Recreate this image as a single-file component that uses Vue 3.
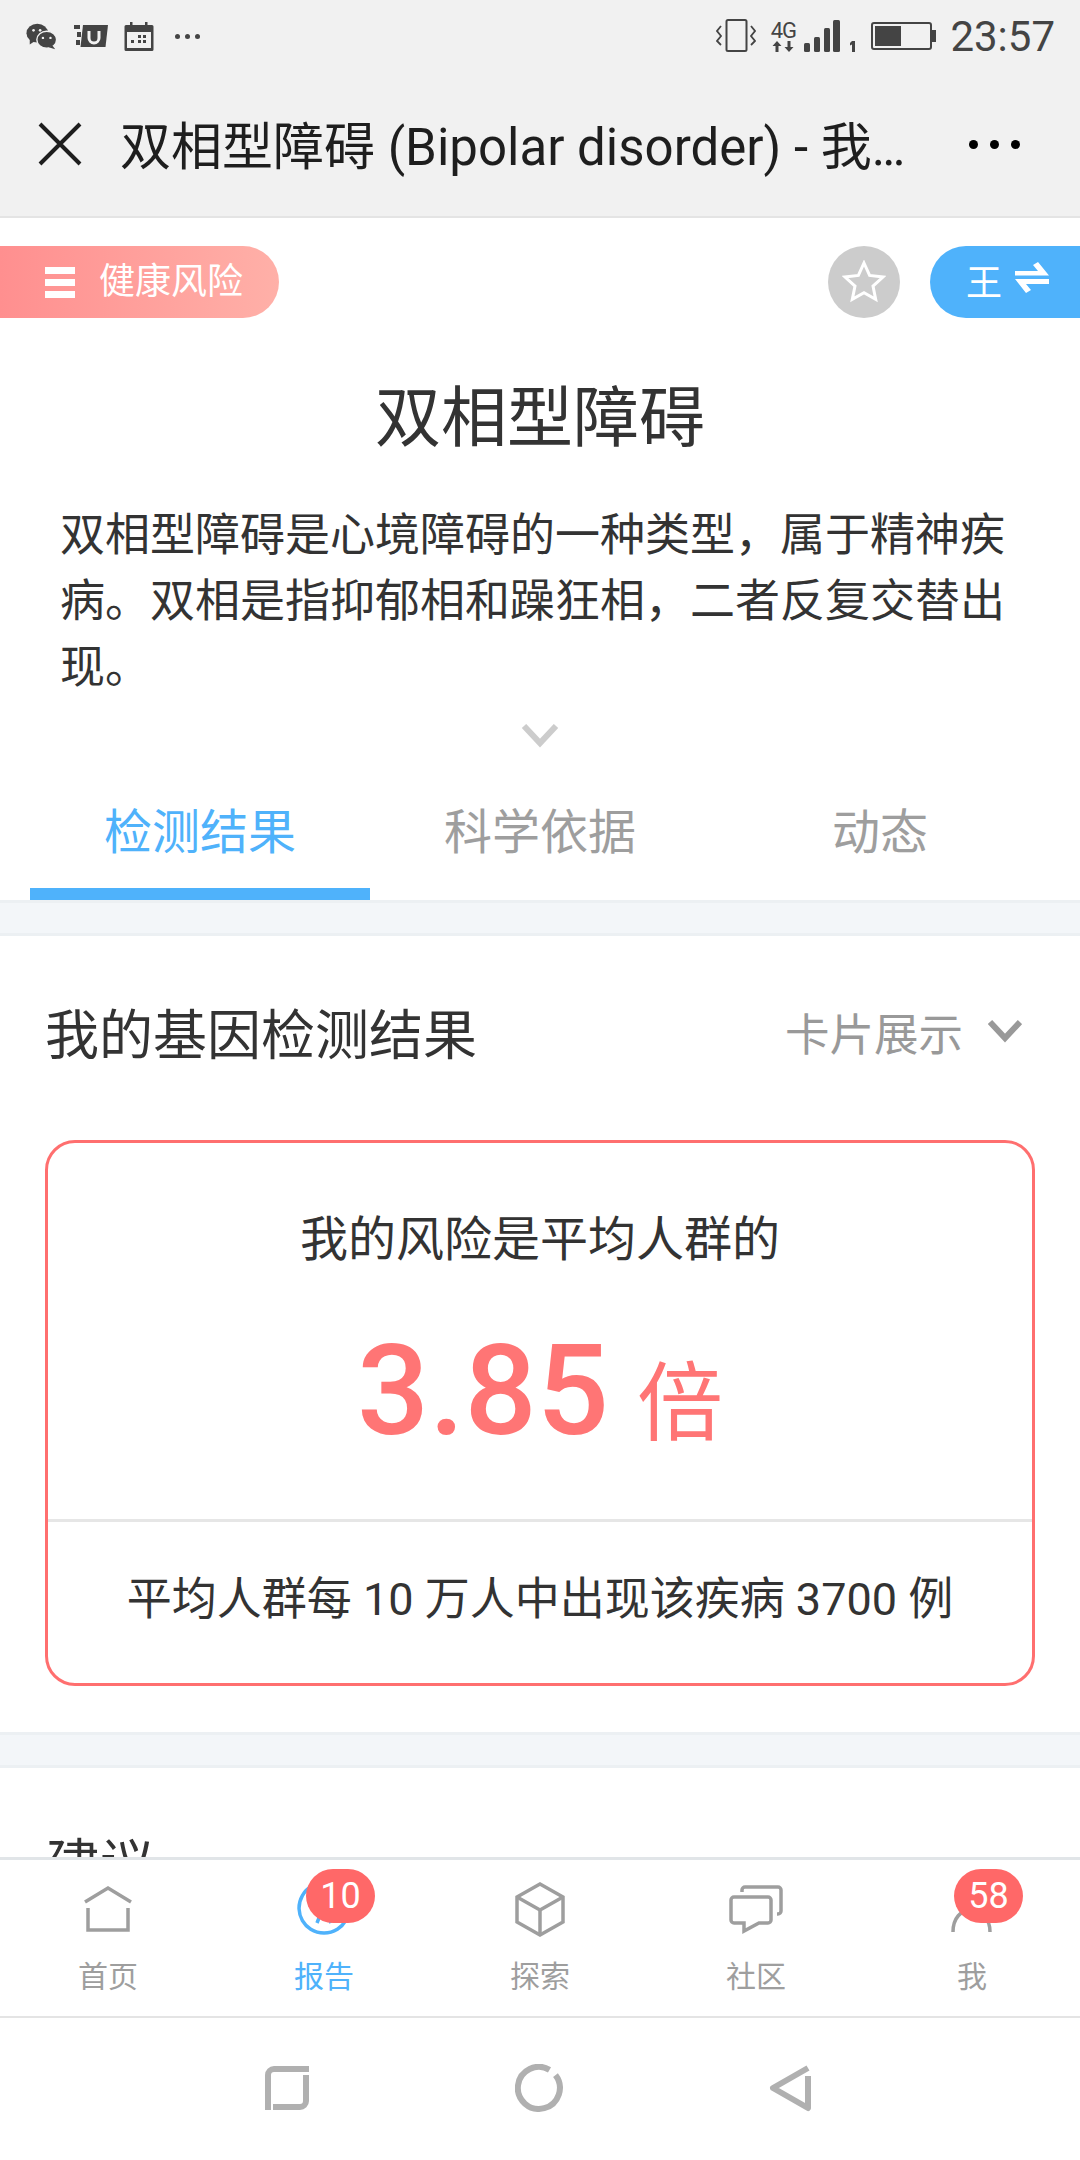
<template>
  <div class="page">
    <div class="status-bar">
      <div class="status-left">
        <svg width="32" height="28" viewBox="0 0 34 28"><ellipse cx="12" cy="11" rx="11.5" ry="10" fill="#444"/><path d="M4 17l0 6 6-4z" fill="#444"/><ellipse cx="22" cy="18" rx="10.500" ry="9" fill="#444" stroke="#f1f1f1" stroke-width="1.500"/><path d="M28 24l3 4-7-2z" fill="#444"/><circle cx="8" cy="8" r="1.400" fill="#f1f1f1"/><circle cx="15" cy="8" r="1.400" fill="#f1f1f1"/><circle cx="18" cy="16" r="1.300" fill="#f1f1f1"/><circle cx="26" cy="16" r="1.300" fill="#f1f1f1"/></svg>
        <svg width="34" height="24" viewBox="0 0 34 24"><path d="M0 1h6v4H0zM3 8h4v5H3zM2 16h4v5H2z" fill="#444"/><path d="M9 1h25l-2.500 22H6.500z" fill="#444"/><path d="M15 7v7a5 5 0 0 0 10 0V7" fill="none" stroke="#f1f1f1" stroke-width="3"/></svg>
        <svg width="30" height="29" viewBox="0 0 30 29"><path d="M2 3h26a1.500 1.500 0 0 1 1.500 1.500V27.500A1.500 1.500 0 0 1 28 29H2A1.500 1.500 0 0 1 .5 27.500V4.500A1.500 1.500 0 0 1 2 3z" fill="#444"/><rect x="6" y="0" width="2.500" height="5" fill="#444"/><rect x="21" y="0" width="2.500" height="5" fill="#444"/><rect x="3" y="10" width="24" height="16" fill="#f1f1f1"/><path d="M14 13h3v3h-3zM19 13h3v3h-3zM7 18h3v3H7zM14 18h3v3h-3zM19 18h3v3h-3z" fill="#444"/></svg>
        <div class="status-more"><i></i><i></i><i></i></div>
      </div>
      <div class="status-right">
        <svg width="40" height="34" viewBox="0 0 40 34"><rect x="10.500" y="1" width="20" height="31" rx="1.500" fill="none" stroke="#444" stroke-width="2"/><path d="M5 7L1 12l4 5-4 5 4 4M35 7l4 5-4 5 4 5-4 4" fill="none" stroke="#444" stroke-width="1.800"/></svg>
        <div class="net">
          <span>4G</span>
          <svg width="22" height="11" viewBox="0 0 22 11"><path d="M5 0l4.500 5H6.500v6h-3V5H.5zM17 11l-4.500-5h3V0h3v6h3z" fill="#444"/></svg>
        </div>
        <svg class="signal" width="53" height="33" viewBox="0 0 53 33"><rect x="0" y="23" width="6" height="9" rx="1.500" fill="#444"/><rect x="10" y="17" width="6" height="15" rx="1.500" fill="#444"/><rect x="20" y="8" width="6" height="24" rx="1.500" fill="#444"/><rect x="29" y="0" width="7" height="32" rx="1.500" fill="#444"/><path d="M48 21h3v11h-3v-7.500l-2 1v-2.500z" fill="#444"/></svg>
        <svg class="battery" width="65" height="28" viewBox="0 0 65 28"><rect x="1" y="1" width="59" height="26" rx="2" fill="none" stroke="#444" stroke-width="2"/><rect x="4" y="4" width="26" height="20" fill="#444"/><rect x="61" y="8" width="4" height="12" fill="#444"/></svg>
        <span class="clock">23:57</span>
      </div>
    </div>

    <div class="nav-bar">
      <svg class="nav-close" width="44" height="44" viewBox="0 0 44 44"><path d="M2 2l40 40M42 2L2 42" stroke="#1e1e1e" stroke-width="4" fill="none"/></svg>
      <div class="nav-title">双相型障碍 (Bipolar disorder) - 我<span class="dots">...</span></div>
      <div class="nav-more"><i></i><i></i><i></i></div>
    </div>

    <div class="scroll">
      <div class="head">
        <div class="top-row">
          <div class="risk-tag">
            <span class="burger"><i></i><i></i><i></i></span>
            <span class="risk-text">健康风险</span>
          </div>
          <div class="star">
            <svg width="44" height="44" viewBox="0 0 44 44"><path d="M22 3l5.600 12.400 13.400 1.600-10 9.100 2.700 13.300L22 32.800 10.300 39.400 13 26.100 3 17l13.400-1.600z" fill="none" stroke="#fff" stroke-width="3"/></svg>
          </div>
          <div class="user-pill">
            <span class="user-name">王</span>
            <svg class="swap" width="34" height="32" viewBox="0 0 34 32"><path d="M0 10H23L18 4l5-3 11 13.500H0zM34 18v5H11l5 6-5 3L0 18z" fill="#fff"/></svg>
          </div>
        </div>
        <h1 class="title">双相型障碍</h1>
        <p class="desc">双相型障碍是心境障碍的一种类型，属于精神疾病。双相是指抑郁相和躁狂相，二者反复交替出现。</p>
        <div class="expand">
          <svg width="38" height="24" viewBox="0 0 38 24"><path d="M3 2l16 17L35 2" fill="none" stroke="#ccc" stroke-width="6"/></svg>
        </div>
        <div class="tabs">
          <div v-for="(t, i) in tabs" :key="t" class="tab" :class="{ active: i === 0 }">{{ t }}</div>
        </div>
      </div>

      <div class="band"></div>

      <section class="result">
        <div class="result-head">
          <h2>我的基因检测结果</h2>
          <div class="mode">
            <span>卡片展示</span>
            <svg width="34" height="24" viewBox="0 0 34 24"><path d="M2 3l15 16L32 3" fill="none" stroke="#999" stroke-width="6"/></svg>
          </div>
        </div>
        <div class="risk-card">
          <div class="risk-main">
            <p class="risk-label">我的风险是平均人群的</p>
            <p class="risk-value"><b>3.85</b> <span>倍</span></p>
          </div>
          <p class="risk-foot">平均人群每 10 万人中出现该疾病 3700 例</p>
        </div>
      </section>

      <div class="band"></div>

      <section class="advice"><h2>建议</h2></section>
    </div>

    <div class="tab-bar">
      <div v-for="item in navItems" :key="item.label" class="tab-item" :class="{ on: item.on }">
        <div class="tab-icon">
          <svg width="64" height="64" viewBox="0 0 64 64" fill="none" :stroke="item.on ? '#4fb2fb' : '#9e9e9e'" stroke-width="3.500">
            <path v-for="d in item.paths" :key="d" :d="d" />
          </svg>
          <span v-if="item.badge" class="badge">{{ item.badge }}</span>
        </div>
        <span class="tab-label">{{ item.label }}</span>
      </div>
    </div>

    <div class="sys-bar">
      <svg width="44" height="44" viewBox="0 0 44 44"><path d="M3 44V9a6 6 0 0 1 6-6h35M41 9v26a6 6 0 0 1-6 6H8" fill="none" stroke="#b0b0b0" stroke-width="6"/></svg>
      <svg width="48" height="48" viewBox="0 0 48 48"><path d="M40.500 11.100A21 21 0 1 1 34.500 5.800" fill="none" stroke="#b0b0b0" stroke-width="6"/></svg>
      <svg width="42" height="48" viewBox="0 0 42 48"><path d="M39 4L4 24l35 20V12" fill="none" stroke="#b0b0b0" stroke-width="6" stroke-linejoin="round"/></svg>
    </div>
  </div>
</template>

<script setup>
const tabs = ['检测结果', '科学依据', '动态']

const navItems = [
  { label: '首页', paths: ['M9 20L32 6l23 14', 'M12 26v22h40V26'] },
  { label: '报告', on: true, badge: '10', paths: ['M32 1a25 25 0 1 0 .1 0', 'M25 41l7-18 7 18'] },
  { label: '探索', paths: ['M32 2L55 15v25L32 53 9 40V15z', 'M9 15l23 13 23-13', 'M32 28v25'] },
  { label: '社区', paths: ['M10 15h34a3 3 0 0 1 3 3v20a3 3 0 0 1-3 3H35l-15 8v-8H10a3 3 0 0 1-3-3V18a3 3 0 0 1 3-3z', 'M18 10V8a3 3 0 0 1 3-3h33a3 3 0 0 1 3 3v21a3 3 0 0 1-3 3h-1'] },
  { label: '我', badge: '58', paths: ['M13 50c0-14 8-22 18-22s19 8 19 22', 'M31 6a11 11 0 1 0 .1 0'] }
]
</script>

<style>
html, body {
  margin: 0;
  background: #fff;
}
</style>

<style scoped>
.page {
  width: 1080px;
  height: 2160px;
  display: flex;
  flex-direction: column;
  overflow: hidden;
  font-family: Roboto, "Noto Sans CJK SC", sans-serif;
  color: #333;
  background: #fff;
}

p, h1, h2 {
  margin: 0;
  font-weight: 400;
}

/* status bar */
.status-bar {
  height: 72px;
  flex: none;
  box-sizing: border-box;
  padding: 0 25px 0 26px;
  display: flex;
  align-items: center;
  justify-content: space-between;
  background: #f1f1f1;
  color: #444;
}

.status-left {
  display: flex;
  align-items: center;
  gap: 16px;
}

.status-more {
  display: flex;
  gap: 5px;
  margin-left: 5px;
}

.status-more i {
  width: 5px;
  height: 5px;
  border-radius: 50%;
  background: #444;
}

.status-right {
  display: flex;
  align-items: center;
  gap: 14px;
}

.net {
  width: 26px;
  display: flex;
  flex-direction: column;
  align-items: center;
}

.net span {
  font-size: 22px;
  line-height: 20px;
  letter-spacing: -1px;
}

.signal {
  margin-left: -6px;
}

.clock {
  font-size: 42px;
}

/* nav bar */
.nav-bar {
  height: 146px;
  flex: none;
  box-sizing: border-box;
  padding: 0 60px 0 38px;
  display: flex;
  align-items: center;
  background: #f1f1f1;
  border-bottom: 2px solid #e4e4e4;
}

.nav-close {
  flex: none;
  margin-right: 38px;
}

.nav-title {
  flex: 1;
  margin-top: -3px;
  font-size: 51px;
  color: #1e1e1e;
  white-space: nowrap;
}

.dots {
  letter-spacing: -3px;
}

.nav-more {
  display: flex;
  gap: 12px;
}

.nav-more i {
  width: 9px;
  height: 9px;
  border-radius: 50%;
  background: #000;
}

/* head */
.scroll {
  flex: 1;
  min-height: 0;
  overflow: hidden;
}

.top-row {
  display: flex;
  align-items: center;
  padding-top: 28px;
  height: 72px;
}

.risk-tag {
  width: 279px;
  height: 72px;
  box-sizing: border-box;
  padding-left: 45px;
  display: flex;
  align-items: center;
  gap: 24px;
  border-radius: 0 36px 36px 0;
  background: linear-gradient(90deg, #ff8f8f, #ffb0a8);
  color: #fff;
  font-size: 36px;
}

.risk-text {
  margin-top: -8px;
}

.burger {
  display: flex;
  flex-direction: column;
  gap: 5px;
}

.burger i {
  width: 30px;
  height: 7px;
  background: #fff;
}

.star {
  width: 72px;
  height: 72px;
  margin-left: auto;
  border-radius: 50%;
  background: #ccc;
  display: flex;
  align-items: center;
  justify-content: center;
}

.user-pill {
  width: 150px;
  height: 72px;
  margin-left: 30px;
  box-sizing: border-box;
  padding-left: 36px;
  display: flex;
  align-items: center;
  gap: 13px;
  border-radius: 36px 0 0 36px;
  background: #4fb2fb;
  color: #fff;
  font-size: 36px;
}

.user-name {
  margin-top: -5px;
}

.swap {
  margin-top: -10px;
}

.title {
  margin-top: 56px;
  text-align: center;
  font-size: 66px;
  line-height: 90px;
  color: #333;
}

.desc {
  margin: 39px 60px 0;
  font-size: 45px;
  line-height: 66px;
  color: #333;
}

.expand {
  height: 24px;
  margin-top: 23px;
  display: flex;
  justify-content: center;
}

.tabs {
  padding: 0 30px;
  display: flex;
}

.tab {
  flex: 1;
  height: 152px;
  box-sizing: border-box;
  padding-top: 52px;
  text-align: center;
  font-size: 48px;
  line-height: 66px;
  color: #9e9e9e;
}

.tab.active {
  color: #4fb2fb;
  border-bottom: 12px solid #4fb2fb;
}

.band {
  height: 30px;
  background: #f3f6f9;
  border-top: 3px solid #ecf0f3;
  border-bottom: 3px solid #ecf0f3;
}

/* result */
.result {
  padding: 0 45px;
  height: 796px;
  box-sizing: border-box;
}

.result-head {
  height: 204px;
  box-sizing: border-box;
  padding-bottom: 14px;
  display: flex;
  align-items: center;
  justify-content: space-between;
}

.result-head h2 {
  font-size: 54px;
  color: #333;
}

.mode {
  display: flex;
  align-items: center;
  gap: 25px;
  font-size: 44.5px;
  color: #999;
  padding-right: 13px;
}

.risk-card {
  height: 546px;
  box-sizing: border-box;
  border: 3px solid #ff6f6f;
  border-radius: 30px;
  text-align: center;
  display: flex;
  flex-direction: column;
}

.risk-main {
  height: 379px;
  border-bottom: 3px solid #e6e6e6;
  box-sizing: border-box;
}

.risk-label {
  margin-top: 64px;
  font-size: 48px;
  line-height: 66px;
}

.risk-value {
  margin-top: 48px;
  color: #ff7575;
  line-height: 140px;
}

.risk-value b {
  font-size: 127px;
  font-weight: 500;
}

.risk-value span {
  font-size: 86px;
  margin-left: 24px;
}

.risk-foot {
  flex: 1;
  display: flex;
  align-items: center;
  justify-content: center;
  font-size: 45px;
  padding-bottom: 15px;
}

.advice {
  padding: 63px 46px 0;
}

.advice h2 {
  font-size: 54px;
  line-height: 70px;
}

/* bottom bars */
.tab-bar {
  height: 161px;
  flex: none;
  box-sizing: border-box;
  display: flex;
  background: #fff;
  border-top: 3px solid #e1e5e8;
  border-bottom: 2px solid #e4e4e4;
}

.tab-item {
  flex: 1;
  display: flex;
  flex-direction: column;
  align-items: center;
  padding-top: 22px;
}

.tab-icon {
  position: relative;
  width: 64px;
  height: 64px;
}

.tab-label {
  margin-top: 11px;
  font-size: 30px;
  line-height: 40px;
  color: #9e9e9e;
}

.tab-item.on .tab-label {
  color: #4fb2fb;
}

.badge {
  position: absolute;
  left: 14px;
  top: -13px;
  width: 69px;
  height: 54px;
  border-radius: 27px;
  background: #ff6868;
  color: #fff;
  font-size: 36px;
  line-height: 54px;
  text-align: center;
}

.sys-bar {
  height: 142px;
  flex: none;
  box-sizing: border-box;
  padding: 0 4px 2px 0;
  display: flex;
  align-items: center;
  justify-content: center;
  gap: 206px;
  background: #fff;
}
</style>
